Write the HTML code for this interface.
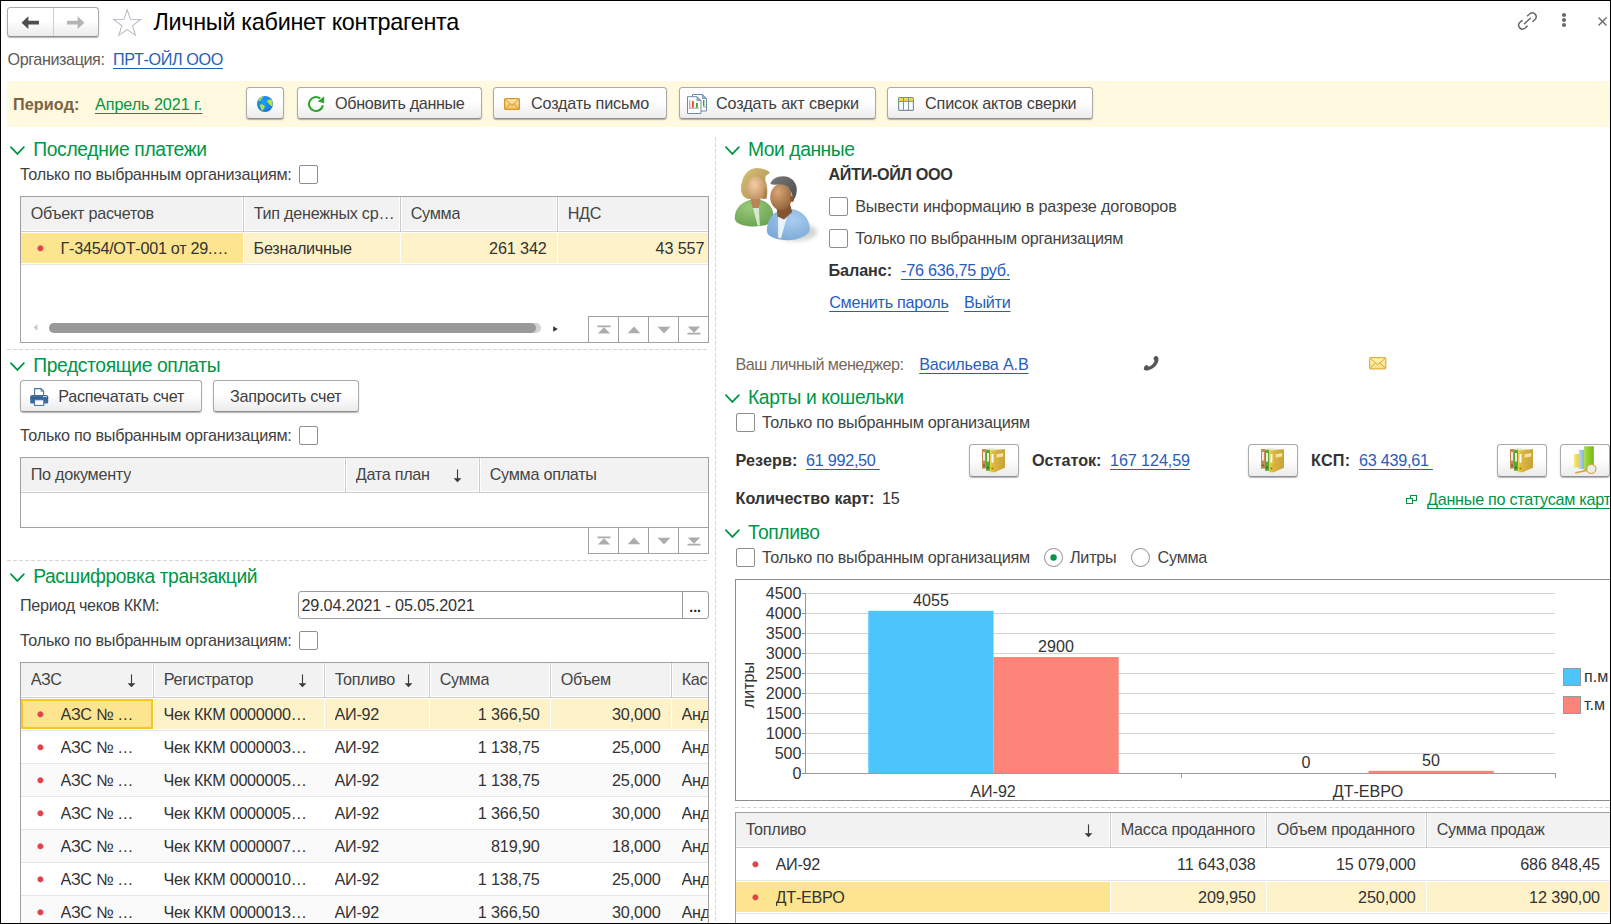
<!DOCTYPE html>
<html lang="ru"><head><meta charset="utf-8"><title>Личный кабинет контрагента</title>
<style>
html,body{margin:0;padding:0;background:#fff;}
body{width:1611px;height:924px;overflow:hidden;font-family:"Liberation Sans",sans-serif;}
#root{position:relative;width:1611px;height:924px;overflow:hidden;background:#fff;box-sizing:border-box;}
#frame{position:absolute;left:0;top:0;width:1611px;height:924px;box-sizing:border-box;border:1px solid #000;z-index:50;pointer-events:none;}
.t{position:absolute;white-space:nowrap;}
.btn{position:absolute;box-sizing:border-box;border:1px solid #ababab;border-bottom-color:#909090;border-radius:3.5px;background:linear-gradient(#ffffff 0%,#ffffff 45%,#ebebeb 100%);box-shadow:0 1px 0 rgba(0,0,0,.16),0 1px 2px rgba(0,0,0,.16);}
.cb{position:absolute;box-sizing:border-box;width:19px;height:19px;border:1px solid #8e8e8e;border-radius:2px;background:#fff;}
.rb{position:absolute;box-sizing:border-box;width:19px;height:19px;border:1px solid #8e8e8e;border-radius:50%;background:#fff;}
.tbl{position:absolute;box-sizing:border-box;border:1px solid #a0a0a0;background:#fff;overflow:hidden;}
.hd{position:absolute;background:#f2f2f2;box-sizing:border-box;}
.dash-h{position:absolute;height:1px !important;background:repeating-linear-gradient(90deg,#d6d6d6 0,#d6d6d6 4px,transparent 4px,transparent 6px);}
.dash-v{position:absolute;width:1px !important;background:repeating-linear-gradient(180deg,#d6d6d6 0,#d6d6d6 4px,transparent 4px,transparent 6px);}
.dot{position:absolute;width:9px;height:9px;background:radial-gradient(circle at 4.4px 4.3px,#df3f48 0,#e2464e 2.4px,rgba(226,70,78,0) 3.5px);}
svg{position:absolute;overflow:visible;}
</style></head><body><div id="root"><div id="frame"></div>
<div class="btn" style="position:absolute;left:7px;top:7px;width:92px;height:30px;"></div>
<div class="" style="position:absolute;left:53px;top:8px;width:1px;height:28px;background:#d0d0d0;"></div>
<svg style="left:21.4px;top:14.8px" width="19" height="15.4" viewBox="0 0 18 14" preserveAspectRatio="none"><path d="M0.5 7 L7 1.2 L7 5.3 L17 5.3 L17 8.7 L7 8.7 L7 12.8 Z" fill="#4d4d4d"/></svg>
<svg style="left:66.2px;top:14.8px" width="19" height="15.4" viewBox="0 0 18 14" preserveAspectRatio="none"><path d="M17.5 7 L11 1.2 L11 5.3 L1 5.3 L1 8.7 L11 8.7 L11 12.8 Z" fill="#b4b4b4"/></svg>
<svg style="left:112.2px;top:7.7px" width="30.3" height="29.3" viewBox="0 0 31 30"><path d="M15.5 1.8 L18.9 11.6 L29.3 11.8 L21 18.1 L24 28 L15.5 22.1 L7 28 L10 18.1 L1.7 11.8 L12.1 11.6 Z" fill="#fff" stroke="#b4bbc3" stroke-width="1.05" stroke-linejoin="miter"/></svg>
<div class="t " style="top:6.79px;font-size:23.4px;line-height:30px;color:#000;left:153.50px;letter-spacing:-0.290px;">Личный кабинет контрагента</div>
<svg style="left:1517.2px;top:11.2px" width="21" height="20.1" viewBox="0 0 23 22"><g fill="none" stroke="#666" stroke-width="1.6" stroke-linecap="round"><path d="M11.5 5.2 L14.2 3 A4.2 4.2 0 0 1 20 9 L17.4 11.4"/><path d="M11.2 16.6 L8.6 18.9 A4.2 4.2 0 0 1 2.8 12.9 L5.5 10.5"/><path d="M8.2 14 L14.6 8"/></g></svg>
<div class="" style="position:absolute;left:1561.8px;top:13.1px;width:4.4px;height:4.0px;border-radius:50%;background:#6a6a6a;"></div>
<div class="" style="position:absolute;left:1561.8px;top:18.1px;width:4.4px;height:4.0px;border-radius:50%;background:#6a6a6a;"></div>
<div class="" style="position:absolute;left:1561.8px;top:23.1px;width:4.4px;height:4.0px;border-radius:50%;background:#6a6a6a;"></div>
<svg style="left:1598px;top:17px" width="9" height="9" viewBox="0 0 9 9"><path d="M0.5 0.5 L8.5 8.5 M8.5 0.5 L0.5 8.5" stroke="#666" stroke-width="1.3" fill="none"/></svg>
<div class="t " style="top:48.59px;font-size:16.2px;line-height:21px;color:#5e5a54;left:7.50px;letter-spacing:-0.428px;">Организация:</div>
<div class="t " style="top:48.59px;font-size:16.2px;line-height:21px;color:#285dbb;left:113.00px;letter-spacing:-0.374px;text-decoration:underline;text-decoration-thickness:1px;text-underline-offset:2.5px;text-decoration-skip-ink:none;">ПРТ-ОЙЛ ООО</div>
<div class="" style="position:absolute;left:7px;top:81px;width:1603px;height:46px;background:#fff9df;"></div>
<div class="t " style="top:93.59px;font-size:16.2px;line-height:21px;color:#7a6243;left:13.00px;font-weight:bold;letter-spacing:0.096px;">Период:</div>
<div class="t " style="top:93.59px;font-size:16.2px;line-height:21px;color:#009646;left:95.00px;letter-spacing:-0.075px;text-decoration:underline;text-decoration-thickness:1px;text-underline-offset:2.5px;text-decoration-skip-ink:none;">Апрель 2021 г.</div>
<div class="btn" style="position:absolute;left:246px;top:87px;width:38px;height:32px;"></div>
<div class="btn" style="position:absolute;left:297px;top:87px;width:185px;height:32px;"></div>
<div class="btn" style="position:absolute;left:493px;top:87px;width:174px;height:32px;"></div>
<div class="btn" style="position:absolute;left:679px;top:87px;width:197px;height:32px;"></div>
<div class="btn" style="position:absolute;left:887px;top:87px;width:206px;height:32px;"></div>
<div class="t " style="top:93.09px;font-size:16.2px;line-height:21px;color:#3f3f3f;left:335.00px;letter-spacing:-0.351px;">Обновить данные</div>
<div class="t " style="top:93.09px;font-size:16.2px;line-height:21px;color:#3f3f3f;left:531.00px;letter-spacing:-0.177px;">Создать письмо</div>
<div class="t " style="top:93.09px;font-size:16.2px;line-height:21px;color:#3f3f3f;left:716.00px;letter-spacing:-0.102px;">Создать акт сверки</div>
<div class="t " style="top:93.09px;font-size:16.2px;line-height:21px;color:#3f3f3f;left:925.00px;letter-spacing:-0.164px;">Список актов сверки</div>
<div class="dash-v" style="position:absolute;left:715px;top:137px;width:0px;height:787px;"></div>
<svg style="left:10.1px;top:145.89999999999998px" width="15" height="10" viewBox="0 0 15 10"><path d="M0.9 1.1 L7.4 7.9 L13.9 1.1" fill="none" stroke="#009646" stroke-width="1.7" stroke-linecap="round" stroke-linejoin="miter"/></svg>
<div class="t " style="top:137.01px;font-size:19.3px;line-height:25px;color:#009646;left:33.20px;letter-spacing:-0.342px;">Последние платежи</div>
<div class="t " style="top:164.19px;font-size:16.2px;line-height:21px;color:#3f3f3f;left:20.00px;letter-spacing:-0.273px;">Только по выбранным организациям:</div>
<div class="cb" style="left:299px;top:165px"></div>
<div class="tbl" style="left:20px;top:196px;width:689px;height:147px;"></div>
<div class="" style="position:absolute;left:21px;top:197px;width:687px;height:33px;background:#f2f2f2;"></div>
<div class="" style="position:absolute;left:21px;top:231px;width:687px;height:1px;background:#cdcdcd;"></div>
<div class="" style="position:absolute;left:242px;top:197px;width:1px;height:34px;background:#fff;"></div>
<div class="" style="position:absolute;left:243px;top:197px;width:1px;height:35px;background:#cacaca;"></div>
<div class="" style="position:absolute;left:244px;top:197px;width:1px;height:34px;background:#fff;"></div>
<div class="" style="position:absolute;left:399px;top:197px;width:1px;height:34px;background:#fff;"></div>
<div class="" style="position:absolute;left:400px;top:197px;width:1px;height:35px;background:#cacaca;"></div>
<div class="" style="position:absolute;left:401px;top:197px;width:1px;height:34px;background:#fff;"></div>
<div class="" style="position:absolute;left:556px;top:197px;width:1px;height:34px;background:#fff;"></div>
<div class="" style="position:absolute;left:557px;top:197px;width:1px;height:35px;background:#cacaca;"></div>
<div class="" style="position:absolute;left:558px;top:197px;width:1px;height:34px;background:#fff;"></div>
<div class="t " style="top:202.89px;font-size:16.2px;line-height:21px;color:#444;left:30.70px;letter-spacing:-0.270px;max-width:215px;overflow:hidden;">Объект расчетов</div>
<div class="t " style="top:202.89px;font-size:16.2px;line-height:21px;color:#444;left:253.70px;letter-spacing:-0.270px;max-width:149px;overflow:hidden;">Тип денежных ср…</div>
<div class="t " style="top:202.89px;font-size:16.2px;line-height:21px;color:#444;left:410.70px;letter-spacing:-0.270px;max-width:149px;overflow:hidden;">Сумма</div>
<div class="t " style="top:202.89px;font-size:16.2px;line-height:21px;color:#444;left:567.70px;letter-spacing:-0.270px;max-width:140.3px;overflow:hidden;">НДС</div>
<div class="" style="position:absolute;left:21px;top:233px;width:222px;height:30px;background:#fde58f;"></div>
<div class="" style="position:absolute;left:244px;top:233px;width:156px;height:30px;background:#fef2c8;"></div>
<div class="" style="position:absolute;left:401px;top:233px;width:156px;height:30px;background:#fef2c8;"></div>
<div class="" style="position:absolute;left:558px;top:233px;width:150px;height:30px;background:#fef2c8;"></div>
<div class="" style="position:absolute;left:21px;top:264px;width:687px;height:1px;background:#e6e6e6;"></div>
<div class="dot" style="left:36px;top:244px"></div>
<div class="t " style="top:237.89px;font-size:16.2px;line-height:21px;color:#333;left:60.60px;letter-spacing:-0.270px;max-width:178.4px;overflow:hidden;">Г-3454/ОТ-001 от 29.…</div>
<div class="t " style="top:237.89px;font-size:16.2px;line-height:21px;color:#333;left:253.60px;letter-spacing:-0.270px;max-width:149px;overflow:hidden;">Безналичные</div>
<div class="t " style="top:237.89px;font-size:16.2px;line-height:21px;color:#333;right:1064.30px;letter-spacing:-0.120px;">261 342</div>
<div class="t " style="top:237.89px;font-size:16.2px;line-height:21px;color:#333;right:906.70px;letter-spacing:-0.120px;">43 557</div>
<svg style="left:33px;top:324px" width="5" height="7" viewBox="0 0 5 7"><path d="M4.5 0.3 L0.5 3.5 L4.5 6.7 Z" fill="#c8c8c8"/></svg>
<svg style="left:553px;top:325.5px" width="5" height="6" viewBox="0 0 5 6"><path d="M0.2 0.2 L4.8 3 L0.2 5.8 Z" fill="#333"/></svg>
<div class="" style="position:absolute;left:49px;top:323px;width:492px;height:9.5px;border-radius:5px;background:#d2d2d2;"></div>
<div class="" style="position:absolute;left:49px;top:323px;width:487px;height:9.5px;border-radius:5px;background:#999;"></div>
<div class="" style="position:absolute;left:588px;top:316px;width:121px;height:27px;box-sizing:border-box;border:1px solid #a0a0a0;background:#fff;"></div>
<div class="" style="position:absolute;left:618px;top:317px;width:1px;height:25px;background:#a0a0a0;"></div>
<div class="" style="position:absolute;left:648px;top:317px;width:1px;height:25px;background:#a0a0a0;"></div>
<div class="" style="position:absolute;left:678px;top:317px;width:1px;height:25px;background:#a0a0a0;"></div>
<svg style="left:596.5px;top:324.5px" width="14" height="10" viewBox="0 0 14 10"><path d="M0.5 0.6 H13.5 V2.2 H0.5 Z M7 2.2 L13.2 8.6 H0.8 Z" fill="#acacac"/></svg>
<svg style="left:626.5px;top:325.5px" width="14" height="8" viewBox="0 0 14 8"><path d="M7 0.6 L13.4 7.2 H0.6 Z" fill="#acacac"/></svg>
<svg style="left:656.5px;top:326.0px" width="14" height="8" viewBox="0 0 14 8"><path d="M7 7.4 L13.4 0.8 H0.6 Z" fill="#acacac"/></svg>
<svg style="left:686.5px;top:325.0px" width="14" height="10" viewBox="0 0 14 10"><path d="M0.5 9.4 H13.5 V7.8 H0.5 Z M7 7.8 L13.2 1.4 H0.8 Z" fill="#acacac"/></svg>
<div class="dash-h" style="position:absolute;left:7px;top:349px;width:700px;height:0px;"></div>
<svg style="left:10.1px;top:361.9px" width="15" height="10" viewBox="0 0 15 10"><path d="M0.9 1.1 L7.4 7.9 L13.9 1.1" fill="none" stroke="#009646" stroke-width="1.7" stroke-linecap="round" stroke-linejoin="miter"/></svg>
<div class="t " style="top:353.01px;font-size:19.3px;line-height:25px;color:#009646;left:33.20px;letter-spacing:-0.371px;">Предстоящие оплаты</div>
<div class="btn" style="position:absolute;left:20px;top:380px;width:182px;height:32px;"></div>
<div class="btn" style="position:absolute;left:213px;top:380px;width:146px;height:32px;"></div>
<div class="t " style="top:385.89px;font-size:16.2px;line-height:21px;color:#3f3f3f;left:58.30px;letter-spacing:-0.270px;">Распечатать счет</div>
<div class="t " style="top:385.89px;font-size:16.2px;line-height:21px;color:#3f3f3f;left:230.00px;letter-spacing:-0.270px;">Запросить счет</div>
<div class="t " style="top:425.19px;font-size:16.2px;line-height:21px;color:#3f3f3f;left:20.00px;letter-spacing:-0.273px;">Только по выбранным организациям:</div>
<div class="cb" style="left:299px;top:426px"></div>
<div class="tbl" style="left:20px;top:457px;width:689px;height:71px;"></div>
<div class="" style="position:absolute;left:21px;top:458px;width:687px;height:33px;background:#f2f2f2;"></div>
<div class="" style="position:absolute;left:21px;top:492px;width:687px;height:1px;background:#cdcdcd;"></div>
<div class="" style="position:absolute;left:344px;top:458px;width:1px;height:34px;background:#fff;"></div>
<div class="" style="position:absolute;left:345px;top:458px;width:1px;height:35px;background:#cacaca;"></div>
<div class="" style="position:absolute;left:346px;top:458px;width:1px;height:34px;background:#fff;"></div>
<div class="" style="position:absolute;left:478px;top:458px;width:1px;height:34px;background:#fff;"></div>
<div class="" style="position:absolute;left:479px;top:458px;width:1px;height:35px;background:#cacaca;"></div>
<div class="" style="position:absolute;left:480px;top:458px;width:1px;height:34px;background:#fff;"></div>
<div class="t " style="top:463.89px;font-size:16.2px;line-height:21px;color:#444;left:30.70px;letter-spacing:-0.270px;max-width:317px;overflow:hidden;">По документу</div>
<div class="t " style="top:463.89px;font-size:16.2px;line-height:21px;color:#444;left:355.70px;letter-spacing:-0.270px;max-width:126px;overflow:hidden;">Дата план</div>
<div class="t " style="top:463.89px;font-size:16.2px;line-height:21px;color:#444;left:489.70px;letter-spacing:-0.270px;max-width:218.3px;overflow:hidden;">Сумма оплаты</div>
<svg style="left:452.5px;top:469px" width="9" height="14" viewBox="0 0 9 14"><path d="M4.5 0.4 L4.5 10" fill="none" stroke="#3a3a3a" stroke-width="1.1"/><path d="M0.6 9.2 L8.4 9.2 L4.5 13.2 Z" fill="#3a3a3a"/></svg>
<div class="" style="position:absolute;left:588px;top:527px;width:121px;height:27px;box-sizing:border-box;border:1px solid #a0a0a0;background:#fff;"></div>
<div class="" style="position:absolute;left:618px;top:528px;width:1px;height:25px;background:#a0a0a0;"></div>
<div class="" style="position:absolute;left:648px;top:528px;width:1px;height:25px;background:#a0a0a0;"></div>
<div class="" style="position:absolute;left:678px;top:528px;width:1px;height:25px;background:#a0a0a0;"></div>
<svg style="left:596.5px;top:535.5px" width="14" height="10" viewBox="0 0 14 10"><path d="M0.5 0.6 H13.5 V2.2 H0.5 Z M7 2.2 L13.2 8.6 H0.8 Z" fill="#acacac"/></svg>
<svg style="left:626.5px;top:536.5px" width="14" height="8" viewBox="0 0 14 8"><path d="M7 0.6 L13.4 7.2 H0.6 Z" fill="#acacac"/></svg>
<svg style="left:656.5px;top:537.0px" width="14" height="8" viewBox="0 0 14 8"><path d="M7 7.4 L13.4 0.8 H0.6 Z" fill="#acacac"/></svg>
<svg style="left:686.5px;top:536.0px" width="14" height="10" viewBox="0 0 14 10"><path d="M0.5 9.4 H13.5 V7.8 H0.5 Z M7 7.8 L13.2 1.4 H0.8 Z" fill="#acacac"/></svg>
<div class="dash-h" style="position:absolute;left:7px;top:560px;width:700px;height:0px;"></div>
<svg style="left:10.1px;top:572.9000000000001px" width="15" height="10" viewBox="0 0 15 10"><path d="M0.9 1.1 L7.4 7.9 L13.9 1.1" fill="none" stroke="#009646" stroke-width="1.7" stroke-linecap="round" stroke-linejoin="miter"/></svg>
<div class="t " style="top:564.01px;font-size:19.3px;line-height:25px;color:#009646;left:33.20px;letter-spacing:-0.401px;">Расшифровка транзакций</div>
<div class="t " style="top:594.89px;font-size:16.2px;line-height:21px;color:#3f3f3f;left:20.00px;letter-spacing:-0.331px;">Период чеков ККМ:</div>
<div class="" style="position:absolute;left:298px;top:591px;width:411px;height:28px;box-sizing:border-box;border:1px solid #9c9c9c;border-radius:3px;background:#fff;"></div>
<div class="" style="position:absolute;left:682px;top:592px;width:1px;height:26px;background:#9c9c9c;"></div>
<div class="t " style="top:594.89px;font-size:16.2px;line-height:21px;color:#333;left:301.50px;letter-spacing:-0.140px;">29.04.2021 - 05.05.2021</div>
<div class="t " style="top:598.15px;font-size:14px;line-height:18px;color:#222;left:689.20px;font-weight:bold;letter-spacing:0.050px;">...</div>
<div class="t " style="top:629.89px;font-size:16.2px;line-height:21px;color:#3f3f3f;left:20.00px;letter-spacing:-0.273px;">Только по выбранным организациям:</div>
<div class="cb" style="left:299px;top:631px"></div>
<div class="tbl" style="left:20px;top:662px;width:689px;height:270px;border-bottom:none;"></div>
<div class="" style="position:absolute;left:21px;top:663px;width:687px;height:33px;background:#f2f2f2;"></div>
<div class="" style="position:absolute;left:21px;top:697px;width:687px;height:1px;background:#cdcdcd;"></div>
<div class="" style="position:absolute;left:152px;top:663px;width:1px;height:34px;background:#fff;"></div>
<div class="" style="position:absolute;left:153px;top:663px;width:1px;height:35px;background:#cacaca;"></div>
<div class="" style="position:absolute;left:154px;top:663px;width:1px;height:34px;background:#fff;"></div>
<div class="" style="position:absolute;left:323px;top:663px;width:1px;height:34px;background:#fff;"></div>
<div class="" style="position:absolute;left:324px;top:663px;width:1px;height:35px;background:#cacaca;"></div>
<div class="" style="position:absolute;left:325px;top:663px;width:1px;height:34px;background:#fff;"></div>
<div class="" style="position:absolute;left:428px;top:663px;width:1px;height:34px;background:#fff;"></div>
<div class="" style="position:absolute;left:429px;top:663px;width:1px;height:35px;background:#cacaca;"></div>
<div class="" style="position:absolute;left:430px;top:663px;width:1px;height:34px;background:#fff;"></div>
<div class="" style="position:absolute;left:549px;top:663px;width:1px;height:34px;background:#fff;"></div>
<div class="" style="position:absolute;left:550px;top:663px;width:1px;height:35px;background:#cacaca;"></div>
<div class="" style="position:absolute;left:551px;top:663px;width:1px;height:34px;background:#fff;"></div>
<div class="" style="position:absolute;left:670px;top:663px;width:1px;height:34px;background:#fff;"></div>
<div class="" style="position:absolute;left:671px;top:663px;width:1px;height:35px;background:#cacaca;"></div>
<div class="" style="position:absolute;left:672px;top:663px;width:1px;height:34px;background:#fff;"></div>
<div class="t " style="top:668.89px;font-size:16.2px;line-height:21px;color:#444;left:30.70px;letter-spacing:-0.270px;max-width:125px;overflow:hidden;">АЗС</div>
<div class="t " style="top:668.89px;font-size:16.2px;line-height:21px;color:#444;left:163.70px;letter-spacing:-0.270px;max-width:163px;overflow:hidden;">Регистратор</div>
<div class="t " style="top:668.89px;font-size:16.2px;line-height:21px;color:#444;left:334.70px;letter-spacing:-0.270px;max-width:97px;overflow:hidden;">Топливо</div>
<div class="t " style="top:668.89px;font-size:16.2px;line-height:21px;color:#444;left:439.70px;letter-spacing:-0.270px;max-width:113px;overflow:hidden;">Сумма</div>
<div class="t " style="top:668.89px;font-size:16.2px;line-height:21px;color:#444;left:560.70px;letter-spacing:-0.270px;max-width:113px;overflow:hidden;">Объем</div>
<div class="t " style="top:668.89px;font-size:16.2px;line-height:21px;color:#444;left:681.70px;letter-spacing:-0.270px;max-width:26.3px;overflow:hidden;">Касса</div>
<svg style="left:126.5px;top:674px" width="9" height="14" viewBox="0 0 9 14"><path d="M4.5 0.4 L4.5 10" fill="none" stroke="#3a3a3a" stroke-width="1.1"/><path d="M0.6 9.2 L8.4 9.2 L4.5 13.2 Z" fill="#3a3a3a"/></svg>
<svg style="left:297.5px;top:674px" width="9" height="14" viewBox="0 0 9 14"><path d="M4.5 0.4 L4.5 10" fill="none" stroke="#3a3a3a" stroke-width="1.1"/><path d="M0.6 9.2 L8.4 9.2 L4.5 13.2 Z" fill="#3a3a3a"/></svg>
<svg style="left:403.5px;top:674px" width="9" height="14" viewBox="0 0 9 14"><path d="M4.5 0.4 L4.5 10" fill="none" stroke="#3a3a3a" stroke-width="1.1"/><path d="M0.6 9.2 L8.4 9.2 L4.5 13.2 Z" fill="#3a3a3a"/></svg>
<div class="" style="position:absolute;left:21px;top:699px;width:132px;height:30px;background:#fde58f;"></div>
<div class="" style="position:absolute;left:154px;top:699px;width:170px;height:30px;background:#fef2c8;"></div>
<div class="" style="position:absolute;left:325px;top:699px;width:104px;height:30px;background:#fef2c8;"></div>
<div class="" style="position:absolute;left:430px;top:699px;width:120px;height:30px;background:#fef2c8;"></div>
<div class="" style="position:absolute;left:551px;top:699px;width:120px;height:30px;background:#fef2c8;"></div>
<div class="" style="position:absolute;left:672px;top:699px;width:36px;height:30px;background:#fef2c8;"></div>
<div class="" style="position:absolute;left:21px;top:730px;width:687px;height:1px;background:#e6e6e6;"></div>
<div class="dot" style="left:36px;top:710px"></div>
<div class="t " style="top:703.89px;font-size:16.2px;line-height:21px;color:#333;left:60.60px;letter-spacing:-0.270px;max-width:88.4px;overflow:hidden;">АЗС № …</div>
<div class="t " style="top:703.89px;font-size:16.2px;line-height:21px;color:#333;left:163.60px;letter-spacing:-0.270px;max-width:163px;overflow:hidden;">Чек ККМ 0000000…</div>
<div class="t " style="top:703.89px;font-size:16.2px;line-height:21px;color:#333;left:334.60px;letter-spacing:-0.270px;max-width:97px;overflow:hidden;">АИ-92</div>
<div class="t " style="top:703.89px;font-size:16.2px;line-height:21px;color:#333;right:1071.30px;letter-spacing:-0.120px;">1 366,50</div>
<div class="t " style="top:703.89px;font-size:16.2px;line-height:21px;color:#333;right:950.30px;letter-spacing:-0.120px;">30,000</div>
<div class="t " style="top:703.89px;font-size:16.2px;line-height:21px;color:#333;left:681.60px;letter-spacing:-0.270px;max-width:26.4px;overflow:hidden;">Андреев</div>
<div class="" style="position:absolute;left:21px;top:763px;width:687px;height:1px;background:#e6e6e6;"></div>
<div class="dot" style="left:36px;top:743px"></div>
<div class="t " style="top:736.89px;font-size:16.2px;line-height:21px;color:#333;left:60.60px;letter-spacing:-0.270px;max-width:88.4px;overflow:hidden;">АЗС № …</div>
<div class="t " style="top:736.89px;font-size:16.2px;line-height:21px;color:#333;left:163.60px;letter-spacing:-0.270px;max-width:163px;overflow:hidden;">Чек ККМ 0000003…</div>
<div class="t " style="top:736.89px;font-size:16.2px;line-height:21px;color:#333;left:334.60px;letter-spacing:-0.270px;max-width:97px;overflow:hidden;">АИ-92</div>
<div class="t " style="top:736.89px;font-size:16.2px;line-height:21px;color:#333;right:1071.30px;letter-spacing:-0.120px;">1 138,75</div>
<div class="t " style="top:736.89px;font-size:16.2px;line-height:21px;color:#333;right:950.30px;letter-spacing:-0.120px;">25,000</div>
<div class="t " style="top:736.89px;font-size:16.2px;line-height:21px;color:#333;left:681.60px;letter-spacing:-0.270px;max-width:26.4px;overflow:hidden;">Андреев</div>
<div class="" style="position:absolute;left:21px;top:764px;width:687px;height:32px;background:#fafafa;"></div>
<div class="" style="position:absolute;left:21px;top:796px;width:687px;height:1px;background:#e6e6e6;"></div>
<div class="dot" style="left:36px;top:776px"></div>
<div class="t " style="top:769.89px;font-size:16.2px;line-height:21px;color:#333;left:60.60px;letter-spacing:-0.270px;max-width:88.4px;overflow:hidden;">АЗС № …</div>
<div class="t " style="top:769.89px;font-size:16.2px;line-height:21px;color:#333;left:163.60px;letter-spacing:-0.270px;max-width:163px;overflow:hidden;">Чек ККМ 0000005…</div>
<div class="t " style="top:769.89px;font-size:16.2px;line-height:21px;color:#333;left:334.60px;letter-spacing:-0.270px;max-width:97px;overflow:hidden;">АИ-92</div>
<div class="t " style="top:769.89px;font-size:16.2px;line-height:21px;color:#333;right:1071.30px;letter-spacing:-0.120px;">1 138,75</div>
<div class="t " style="top:769.89px;font-size:16.2px;line-height:21px;color:#333;right:950.30px;letter-spacing:-0.120px;">25,000</div>
<div class="t " style="top:769.89px;font-size:16.2px;line-height:21px;color:#333;left:681.60px;letter-spacing:-0.270px;max-width:26.4px;overflow:hidden;">Андреев</div>
<div class="" style="position:absolute;left:21px;top:829px;width:687px;height:1px;background:#e6e6e6;"></div>
<div class="dot" style="left:36px;top:809px"></div>
<div class="t " style="top:802.89px;font-size:16.2px;line-height:21px;color:#333;left:60.60px;letter-spacing:-0.270px;max-width:88.4px;overflow:hidden;">АЗС № …</div>
<div class="t " style="top:802.89px;font-size:16.2px;line-height:21px;color:#333;left:163.60px;letter-spacing:-0.270px;max-width:163px;overflow:hidden;">Чек ККМ 0000005…</div>
<div class="t " style="top:802.89px;font-size:16.2px;line-height:21px;color:#333;left:334.60px;letter-spacing:-0.270px;max-width:97px;overflow:hidden;">АИ-92</div>
<div class="t " style="top:802.89px;font-size:16.2px;line-height:21px;color:#333;right:1071.30px;letter-spacing:-0.120px;">1 366,50</div>
<div class="t " style="top:802.89px;font-size:16.2px;line-height:21px;color:#333;right:950.30px;letter-spacing:-0.120px;">30,000</div>
<div class="t " style="top:802.89px;font-size:16.2px;line-height:21px;color:#333;left:681.60px;letter-spacing:-0.270px;max-width:26.4px;overflow:hidden;">Андреев</div>
<div class="" style="position:absolute;left:21px;top:830px;width:687px;height:32px;background:#fafafa;"></div>
<div class="" style="position:absolute;left:21px;top:862px;width:687px;height:1px;background:#e6e6e6;"></div>
<div class="dot" style="left:36px;top:842px"></div>
<div class="t " style="top:835.89px;font-size:16.2px;line-height:21px;color:#333;left:60.60px;letter-spacing:-0.270px;max-width:88.4px;overflow:hidden;">АЗС № …</div>
<div class="t " style="top:835.89px;font-size:16.2px;line-height:21px;color:#333;left:163.60px;letter-spacing:-0.270px;max-width:163px;overflow:hidden;">Чек ККМ 0000007…</div>
<div class="t " style="top:835.89px;font-size:16.2px;line-height:21px;color:#333;left:334.60px;letter-spacing:-0.270px;max-width:97px;overflow:hidden;">АИ-92</div>
<div class="t " style="top:835.89px;font-size:16.2px;line-height:21px;color:#333;right:1071.30px;letter-spacing:-0.120px;">819,90</div>
<div class="t " style="top:835.89px;font-size:16.2px;line-height:21px;color:#333;right:950.30px;letter-spacing:-0.120px;">18,000</div>
<div class="t " style="top:835.89px;font-size:16.2px;line-height:21px;color:#333;left:681.60px;letter-spacing:-0.270px;max-width:26.4px;overflow:hidden;">Андреев</div>
<div class="" style="position:absolute;left:21px;top:895px;width:687px;height:1px;background:#e6e6e6;"></div>
<div class="dot" style="left:36px;top:875px"></div>
<div class="t " style="top:868.89px;font-size:16.2px;line-height:21px;color:#333;left:60.60px;letter-spacing:-0.270px;max-width:88.4px;overflow:hidden;">АЗС № …</div>
<div class="t " style="top:868.89px;font-size:16.2px;line-height:21px;color:#333;left:163.60px;letter-spacing:-0.270px;max-width:163px;overflow:hidden;">Чек ККМ 0000010…</div>
<div class="t " style="top:868.89px;font-size:16.2px;line-height:21px;color:#333;left:334.60px;letter-spacing:-0.270px;max-width:97px;overflow:hidden;">АИ-92</div>
<div class="t " style="top:868.89px;font-size:16.2px;line-height:21px;color:#333;right:1071.30px;letter-spacing:-0.120px;">1 138,75</div>
<div class="t " style="top:868.89px;font-size:16.2px;line-height:21px;color:#333;right:950.30px;letter-spacing:-0.120px;">25,000</div>
<div class="t " style="top:868.89px;font-size:16.2px;line-height:21px;color:#333;left:681.60px;letter-spacing:-0.270px;max-width:26.4px;overflow:hidden;">Андреев</div>
<div class="" style="position:absolute;left:21px;top:896px;width:687px;height:32px;background:#fafafa;"></div>
<div class="" style="position:absolute;left:21px;top:928px;width:687px;height:1px;background:#e6e6e6;"></div>
<div class="dot" style="left:36px;top:908px"></div>
<div class="t " style="top:901.89px;font-size:16.2px;line-height:21px;color:#333;left:60.60px;letter-spacing:-0.270px;max-width:88.4px;overflow:hidden;">АЗС № …</div>
<div class="t " style="top:901.89px;font-size:16.2px;line-height:21px;color:#333;left:163.60px;letter-spacing:-0.270px;max-width:163px;overflow:hidden;">Чек ККМ 0000013…</div>
<div class="t " style="top:901.89px;font-size:16.2px;line-height:21px;color:#333;left:334.60px;letter-spacing:-0.270px;max-width:97px;overflow:hidden;">АИ-92</div>
<div class="t " style="top:901.89px;font-size:16.2px;line-height:21px;color:#333;right:1071.30px;letter-spacing:-0.120px;">1 366,50</div>
<div class="t " style="top:901.89px;font-size:16.2px;line-height:21px;color:#333;right:950.30px;letter-spacing:-0.120px;">30,000</div>
<div class="t " style="top:901.89px;font-size:16.2px;line-height:21px;color:#333;left:681.60px;letter-spacing:-0.270px;max-width:26.4px;overflow:hidden;">Андреев</div>
<div class="" style="position:absolute;left:21px;top:699px;width:132px;height:30px;box-sizing:border-box;border:2px solid #f7c52a;"></div>
<svg style="left:725.0px;top:145.89999999999998px" width="15" height="10" viewBox="0 0 15 10"><path d="M0.9 1.1 L7.4 7.9 L13.9 1.1" fill="none" stroke="#009646" stroke-width="1.7" stroke-linecap="round" stroke-linejoin="miter"/></svg>
<div class="t " style="top:137.01px;font-size:19.3px;line-height:25px;color:#009646;left:748.00px;letter-spacing:-0.448px;">Мои данные</div>
<svg style="left:730px;top:163px" width="90" height="85" viewBox="730 163 90 85"><ellipse cx="796" cy="232" rx="21" ry="9" fill="#000" opacity="0.17" filter="url(#fBlur2)"/><g filter="url(#fBlur)"><path d="M734.8 219 C734 207 745 199.6 755 199.3 C766 199.3 774 206 773.8 219 C773 224 762 226.6 754 226.6 C745 226.6 735.5 224 734.8 219 Z" fill="url(#gGreen)"/><path d="M752.5 206 L758.8 206 L759.8 225.6 L757.6 225.6 Z" fill="#d4ead0"/><path d="M750.5 199 L760.5 199 L758.8 208 L752.5 208 Z" fill="#b98457"/><path d="M741.3 190 C741 178 747 168.4 757 168.3 C763 168.3 768.5 170.5 769.8 173 C766 174.5 764.5 177 765.5 181 C767.5 186 768 193 766.5 198.5 L748 199 C743.5 197.5 741.5 194 741.3 190 Z" fill="url(#gHairW)"/><ellipse cx="756.2" cy="188" rx="9.3" ry="11.4" fill="url(#gSkinW)"/><path d="M744.5 188 C744 180 748 175.5 754 176.5 C760 177.5 766 175.5 769.8 173 C768.5 170.5 763 168.3 757 168.3 C748 168.3 741 176 741.3 190 C741.5 193 742.5 195 744 196.5 C744 193 744.3 190 744.5 188 Z" fill="url(#gHairW)"/><path d="M764.5 188 C766.5 190 767.8 194 766.5 198.5 L762.5 199 C764 196 764.8 192 764.5 188 Z" fill="#a8844e"/><path d="M767 232 C766 218 776 209.3 788 208.8 C800 208.8 810 217 809.8 230 C809 236 797 240.2 788 240.2 C778 240.2 767.6 237 767 232 Z" fill="url(#gBlue)"/><path d="M778 217 L787 217 L781 238.3 L778.2 237.8 Z" fill="#eaf2fa"/><path d="M776.5 206 L790 204 L792.2 212 L784 219.5 L777.5 216.5 Z" fill="#84552f"/><ellipse cx="781" cy="197" rx="10.8" ry="13.2" fill="url(#gSkinM)"/><path d="M770.3 184 C771.5 179.5 776.5 176.2 783 176.2 C791.5 176.2 797 182.5 796.8 190 C796.7 194.5 795 198.5 792.8 201 C793.2 197 792 192.5 789.8 190 C788.5 186.5 785 184.6 780.5 184.6 C776.5 184.6 773 185.2 770.3 184 Z" fill="url(#gHairM)"/><ellipse cx="792.2" cy="199" rx="1.7" ry="3" fill="#84552f"/></g></svg>
<div class="t " style="top:163.89px;font-size:16.2px;line-height:21px;color:#333;left:828.50px;font-weight:bold;letter-spacing:-0.341px;">АЙТИ-ОЙЛ ООО</div>
<div class="cb" style="left:829px;top:197px"></div>
<div class="t " style="top:195.99px;font-size:16.2px;line-height:21px;color:#434343;left:855.20px;letter-spacing:-0.146px;">Вывести информацию в разрезе договоров</div>
<div class="cb" style="left:829px;top:229px"></div>
<div class="t " style="top:227.89px;font-size:16.2px;line-height:21px;color:#434343;left:855.20px;letter-spacing:-0.250px;">Только по выбранным организациям</div>
<div class="t " style="top:259.89px;font-size:16.2px;line-height:21px;color:#333;left:828.50px;font-weight:bold;letter-spacing:-0.087px;">Баланс:</div>
<div class="t " style="top:259.89px;font-size:16.2px;line-height:21px;color:#285dbb;left:901.00px;letter-spacing:-0.252px;text-decoration:underline;text-decoration-thickness:1px;text-underline-offset:2.5px;text-decoration-skip-ink:none;">-76 636,75 руб.</div>
<div class="t " style="top:292.09px;font-size:16.2px;line-height:21px;color:#285dbb;left:829.20px;letter-spacing:-0.282px;text-decoration:underline;text-decoration-thickness:1px;text-underline-offset:2.5px;text-decoration-skip-ink:none;">Сменить пароль</div>
<div class="t " style="top:292.09px;font-size:16.2px;line-height:21px;color:#285dbb;left:964.00px;letter-spacing:-0.287px;text-decoration:underline;text-decoration-thickness:1px;text-underline-offset:2.5px;text-decoration-skip-ink:none;">Выйти</div>
<div class="t " style="top:353.89px;font-size:16.2px;line-height:21px;color:#77685a;left:735.50px;letter-spacing:-0.541px;">Ваш личный менеджер:</div>
<div class="t " style="top:353.89px;font-size:16.2px;line-height:21px;color:#285dbb;left:919.20px;letter-spacing:-0.194px;text-decoration:underline;text-decoration-thickness:1px;text-underline-offset:2.5px;text-decoration-skip-ink:none;">Васильева А.В</div>
<svg style="left:1142px;top:354px" width="18" height="18" viewBox="1142 354 18 18"><path fill="#555" d="M1153.6 358.2 C1154 356.4 1156 355.6 1157.4 356.4 C1158.8 357.6 1158.8 360.4 1157.8 362.4 C1156.6 365 1154.4 367.4 1151.6 369 C1149.4 370.2 1146.6 370.9 1145 370.3 C1143.6 369.6 1143.4 367.6 1144.6 366.4 C1145.4 365.4 1146.6 364.6 1147.4 365.4 C1147.9 366 1148.4 366.6 1149.2 366.4 C1151.4 365.6 1153.6 363.4 1154.4 361.4 C1154.7 360.6 1154.3 360 1153.8 359.4 C1153.5 359 1153.5 358.6 1153.6 358.2 Z"/></svg>

<svg style="left:725.0px;top:393.5px" width="15" height="10" viewBox="0 0 15 10"><path d="M0.9 1.1 L7.4 7.9 L13.9 1.1" fill="none" stroke="#009646" stroke-width="1.7" stroke-linecap="round" stroke-linejoin="miter"/></svg>
<div class="t " style="top:384.61px;font-size:19.3px;line-height:25px;color:#009646;left:748.00px;letter-spacing:-0.397px;">Карты и кошельки</div>
<div class="cb" style="left:736px;top:413px"></div>
<div class="t " style="top:411.89px;font-size:16.2px;line-height:21px;color:#434343;left:762.00px;letter-spacing:-0.250px;">Только по выбранным организациям</div>
<div class="t " style="top:450.19px;font-size:16.2px;line-height:21px;color:#333;left:735.50px;font-weight:bold;letter-spacing:0.076px;">Резерв:</div>
<div class="t " style="top:450.19px;font-size:16.2px;line-height:21px;color:#285dbb;left:806.00px;letter-spacing:-0.272px;text-decoration:underline;text-decoration-thickness:1px;text-underline-offset:2.5px;text-decoration-skip-ink:none;">61 992,50&nbsp;</div>
<div class="btn" style="position:absolute;left:969px;top:444px;width:50px;height:33px;"></div>
<div class="t " style="top:450.19px;font-size:16.2px;line-height:21px;color:#333;left:1032.00px;font-weight:bold;letter-spacing:-0.016px;">Остаток:</div>
<div class="t " style="top:450.19px;font-size:16.2px;line-height:21px;color:#285dbb;left:1110.00px;letter-spacing:-0.103px;text-decoration:underline;text-decoration-thickness:1px;text-underline-offset:2.5px;text-decoration-skip-ink:none;">167 124,59</div>
<div class="btn" style="position:absolute;left:1248px;top:444px;width:50px;height:33px;"></div>
<div class="t " style="top:450.19px;font-size:16.2px;line-height:21px;color:#333;left:1311.00px;font-weight:bold;letter-spacing:0.227px;">КСП:</div>
<div class="t " style="top:450.19px;font-size:16.2px;line-height:21px;color:#285dbb;left:1359.00px;letter-spacing:-0.262px;text-decoration:underline;text-decoration-thickness:1px;text-underline-offset:2.5px;text-decoration-skip-ink:none;">63 439,61&nbsp;</div>
<div class="btn" style="position:absolute;left:1497px;top:444px;width:50px;height:33px;"></div>
<div class="btn" style="position:absolute;left:1560px;top:444px;width:50px;height:33px;"></div>
<div class="t " style="top:487.89px;font-size:16.2px;line-height:21px;color:#333;left:735.50px;font-weight:bold;letter-spacing:0.004px;">Количество карт:</div>
<div class="t " style="top:487.89px;font-size:16.2px;line-height:21px;color:#333;left:882.00px;letter-spacing:-0.270px;">15</div>
<div class="t " style="top:489.29px;font-size:16.2px;line-height:21px;color:#009646;left:1427.00px;letter-spacing:-0.270px;text-decoration:underline;text-decoration-thickness:1px;text-underline-offset:2.5px;text-decoration-skip-ink:none;">Данные по статусам карт</div>
<svg style="left:1405px;top:494px" width="13" height="11" viewBox="1405 494 13 11"><rect x="1410.5" y="495.5" width="6" height="5" fill="#fff" stroke="#009646" stroke-width="1"/><rect x="1406.5" y="498.5" width="6" height="5" fill="#fff" stroke="#009646" stroke-width="1"/></svg>
<svg style="left:725.0px;top:528.7px" width="15" height="10" viewBox="0 0 15 10"><path d="M0.9 1.1 L7.4 7.9 L13.9 1.1" fill="none" stroke="#009646" stroke-width="1.7" stroke-linecap="round" stroke-linejoin="miter"/></svg>
<div class="t " style="top:519.81px;font-size:19.3px;line-height:25px;color:#009646;left:748.00px;letter-spacing:-0.388px;">Топливо</div>
<div class="cb" style="left:736px;top:548px"></div>
<div class="t " style="top:546.89px;font-size:16.2px;line-height:21px;color:#434343;left:762.00px;letter-spacing:-0.250px;">Только по выбранным организациям</div>
<div class="rb" style="left:1043.5px;top:548px"></div>
<svg style="left:1043px;top:548px" width="20" height="20" viewBox="0 0 20 20"><circle cx="10.55" cy="9.5" r="3.2" fill="#009646"/></svg>
<div class="t " style="top:546.89px;font-size:16.2px;line-height:21px;color:#434343;left:1070.00px;letter-spacing:-0.270px;">Литры</div>
<div class="rb" style="left:1130.7px;top:548px"></div>
<div class="t " style="top:546.89px;font-size:16.2px;line-height:21px;color:#434343;left:1157.60px;letter-spacing:-0.270px;">Сумма</div>
<div class="" style="position:absolute;left:735px;top:579px;width:880px;height:222px;box-sizing:border-box;border:1px solid #8c8c8c;background:#fff;"></div>
<svg style="left:735px;top:579px" width="875" height="222" viewBox="735 579 875 222" font-family="Liberation Sans, sans-serif"><rect x="802" y="773" width="4" height="1" fill="#8a8a8a"/><text x="801.5" y="779.00" font-size="16.1" fill="#333" text-anchor="end">0</text><rect x="806" y="753" width="749" height="1" fill="#d4d4d4"/><rect x="802" y="753" width="4" height="1" fill="#8a8a8a"/><text x="801.5" y="759.00" font-size="16.1" fill="#333" text-anchor="end">500</text><rect x="806" y="733" width="749" height="1" fill="#d4d4d4"/><rect x="802" y="733" width="4" height="1" fill="#8a8a8a"/><text x="801.5" y="739.00" font-size="16.1" fill="#333" text-anchor="end">1000</text><rect x="806" y="713" width="749" height="1" fill="#d4d4d4"/><rect x="802" y="713" width="4" height="1" fill="#8a8a8a"/><text x="801.5" y="719.00" font-size="16.1" fill="#333" text-anchor="end">1500</text><rect x="806" y="693" width="749" height="1" fill="#d4d4d4"/><rect x="802" y="693" width="4" height="1" fill="#8a8a8a"/><text x="801.5" y="699.00" font-size="16.1" fill="#333" text-anchor="end">2000</text><rect x="806" y="673" width="749" height="1" fill="#d4d4d4"/><rect x="802" y="673" width="4" height="1" fill="#8a8a8a"/><text x="801.5" y="679.00" font-size="16.1" fill="#333" text-anchor="end">2500</text><rect x="806" y="653" width="749" height="1" fill="#d4d4d4"/><rect x="802" y="653" width="4" height="1" fill="#8a8a8a"/><text x="801.5" y="659.00" font-size="16.1" fill="#333" text-anchor="end">3000</text><rect x="806" y="633" width="749" height="1" fill="#d4d4d4"/><rect x="802" y="633" width="4" height="1" fill="#8a8a8a"/><text x="801.5" y="639.00" font-size="16.1" fill="#333" text-anchor="end">3500</text><rect x="806" y="613" width="749" height="1" fill="#d4d4d4"/><rect x="802" y="613" width="4" height="1" fill="#8a8a8a"/><text x="801.5" y="619.00" font-size="16.1" fill="#333" text-anchor="end">4000</text><rect x="806" y="593" width="749" height="1" fill="#d4d4d4"/><rect x="802" y="593" width="4" height="1" fill="#8a8a8a"/><text x="801.5" y="599.00" font-size="16.1" fill="#333" text-anchor="end">4500</text><rect x="868.3" y="610.80" width="125.2" height="162.20" fill="#4cc4fc"/><rect x="993.5" y="657.00" width="125.2" height="116.00" fill="#fc8478"/><rect x="1368.5" y="770.80" width="125.2" height="2.2" fill="#fc8478"/><rect x="805" y="593" width="1" height="181" fill="#9a9a9a"/><rect x="805" y="773.0" width="751" height="1" fill="#9a9a9a"/><rect x="1181" y="773.0" width="1" height="5" fill="#9a9a9a"/><rect x="1555" y="773.0" width="1" height="5" fill="#9a9a9a"/><text x="931" y="606" font-size="16.1" fill="#333" text-anchor="middle">4055</text><text x="1056" y="652" font-size="16.1" fill="#333" text-anchor="middle">2900</text><text x="1306" y="768" font-size="16.1" fill="#333" text-anchor="middle">0</text><text x="1431" y="766" font-size="16.1" fill="#333" text-anchor="middle">50</text><text x="993" y="797" font-size="16.1" fill="#333" text-anchor="middle">АИ-92</text><text x="1368" y="797" font-size="16.1" fill="#333" text-anchor="middle">ДТ-ЕВРО</text><text transform="translate(754,685) rotate(-90)" font-size="16.1" fill="#333" text-anchor="middle">литры</text><rect x="1563.5" y="668.5" width="17" height="17" fill="#4cc4fc" stroke="#9a9a9a" stroke-width="1"/><rect x="1563.5" y="696.5" width="17" height="17" fill="#fc8478" stroke="#9a9a9a" stroke-width="1"/><text x="1584" y="682" font-size="16.1" fill="#333">п.м</text><text x="1584" y="710" font-size="16.1" fill="#333">т.м</text></svg>
<div class="dash-h" style="position:absolute;left:735px;top:807px;width:876px;height:0px;"></div>
<div class="tbl" style="left:735px;top:812px;width:880px;height:120px;border-right:none;border-bottom:none;"></div>
<div class="" style="position:absolute;left:736px;top:813px;width:879px;height:33px;background:#f2f2f2;"></div>
<div class="" style="position:absolute;left:736px;top:847px;width:879px;height:1px;background:#cdcdcd;"></div>
<div class="" style="position:absolute;left:1109px;top:813px;width:1px;height:34px;background:#fff;"></div>
<div class="" style="position:absolute;left:1110px;top:813px;width:1px;height:35px;background:#cacaca;"></div>
<div class="" style="position:absolute;left:1111px;top:813px;width:1px;height:34px;background:#fff;"></div>
<div class="" style="position:absolute;left:1265px;top:813px;width:1px;height:34px;background:#fff;"></div>
<div class="" style="position:absolute;left:1266px;top:813px;width:1px;height:35px;background:#cacaca;"></div>
<div class="" style="position:absolute;left:1267px;top:813px;width:1px;height:34px;background:#fff;"></div>
<div class="" style="position:absolute;left:1425px;top:813px;width:1px;height:34px;background:#fff;"></div>
<div class="" style="position:absolute;left:1426px;top:813px;width:1px;height:35px;background:#cacaca;"></div>
<div class="" style="position:absolute;left:1427px;top:813px;width:1px;height:34px;background:#fff;"></div>
<div class="t " style="top:818.89px;font-size:16.2px;line-height:21px;color:#444;left:745.70px;letter-spacing:-0.270px;max-width:367px;overflow:hidden;">Топливо</div>
<div class="t " style="top:818.89px;font-size:16.2px;line-height:21px;color:#444;left:1120.70px;letter-spacing:-0.270px;max-width:148px;overflow:hidden;">Масса проданного</div>
<div class="t " style="top:818.89px;font-size:16.2px;line-height:21px;color:#444;left:1276.70px;letter-spacing:-0.270px;max-width:152px;overflow:hidden;">Объем проданного</div>
<div class="t " style="top:818.89px;font-size:16.2px;line-height:21px;color:#444;left:1436.70px;letter-spacing:-0.270px;max-width:178.3px;overflow:hidden;">Сумма продаж</div>
<svg style="left:1083.5px;top:824px" width="9" height="14" viewBox="0 0 9 14"><path d="M4.5 0.4 L4.5 10" fill="none" stroke="#3a3a3a" stroke-width="1.1"/><path d="M0.6 9.2 L8.4 9.2 L4.5 13.2 Z" fill="#3a3a3a"/></svg>
<div class="" style="position:absolute;left:736px;top:880px;width:879px;height:1px;background:#e6e6e6;"></div>
<div class="dot" style="left:751px;top:860px"></div>
<div class="t " style="top:853.89px;font-size:16.2px;line-height:21px;color:#333;left:775.60px;letter-spacing:-0.270px;max-width:330.4px;overflow:hidden;">АИ-92</div>
<div class="t " style="top:853.89px;font-size:16.2px;line-height:21px;color:#333;right:355.30px;letter-spacing:-0.120px;">11 643,038</div>
<div class="t " style="top:853.89px;font-size:16.2px;line-height:21px;color:#333;right:195.30px;letter-spacing:-0.120px;">15 079,000</div>
<div class="t " style="top:853.89px;font-size:16.2px;line-height:21px;color:#333;right:11.00px;letter-spacing:-0.120px;">686 848,45</div>
<div class="" style="position:absolute;left:736px;top:882px;width:374px;height:30px;background:#fde58f;"></div>
<div class="" style="position:absolute;left:1111px;top:882px;width:155px;height:30px;background:#fef2c8;"></div>
<div class="" style="position:absolute;left:1267px;top:882px;width:159px;height:30px;background:#fef2c8;"></div>
<div class="" style="position:absolute;left:1427px;top:882px;width:188px;height:30px;background:#fef2c8;"></div>
<div class="" style="position:absolute;left:736px;top:913px;width:879px;height:1px;background:#e6e6e6;"></div>
<div class="dot" style="left:751px;top:893px"></div>
<div class="t " style="top:886.89px;font-size:16.2px;line-height:21px;color:#333;left:775.60px;letter-spacing:-0.270px;max-width:330.4px;overflow:hidden;">ДТ-ЕВРО</div>
<div class="t " style="top:886.89px;font-size:16.2px;line-height:21px;color:#333;right:355.30px;letter-spacing:-0.120px;">209,950</div>
<div class="t " style="top:886.89px;font-size:16.2px;line-height:21px;color:#333;right:195.30px;letter-spacing:-0.120px;">250,000</div>
<div class="t " style="top:886.89px;font-size:16.2px;line-height:21px;color:#333;right:11.00px;letter-spacing:-0.120px;">12 390,00</div>
<svg width="0" height="0" style="left:0;top:0"><defs>
<radialGradient id="gGlobe" cx="0.4" cy="0.35" r="0.75"><stop offset="0" stop-color="#1aa0ff"/><stop offset="1" stop-color="#1a6fe0"/></radialGradient>
<linearGradient id="gMail" x1="0" y1="0" x2="0" y2="1"><stop offset="0" stop-color="#feecb4"/><stop offset="1" stop-color="#f5bf5c"/></linearGradient>
<linearGradient id="gMail2" x1="0" y1="0" x2="0" y2="1"><stop offset="0" stop-color="#fdf5b8"/><stop offset="1" stop-color="#f7dc84"/></linearGradient>
<radialGradient id="gSkinW" cx="0.4" cy="0.35" r="0.8"><stop offset="0" stop-color="#f3cfa5"/><stop offset="1" stop-color="#b98457"/></radialGradient>
<radialGradient id="gSkinM" cx="0.35" cy="0.3" r="0.85"><stop offset="0" stop-color="#d9a675"/><stop offset="1" stop-color="#8a5a35"/></radialGradient>
<radialGradient id="gGreen" cx="0.4" cy="0.3" r="0.9"><stop offset="0" stop-color="#9cc97c"/><stop offset="1" stop-color="#5f9a48"/></radialGradient>
<radialGradient id="gBlue" cx="0.6" cy="0.35" r="0.9"><stop offset="0" stop-color="#a9cdf0"/><stop offset="1" stop-color="#6f9fd0"/></radialGradient>
<linearGradient id="gHairW" x1="0" y1="0" x2="1" y2="1"><stop offset="0" stop-color="#d9c27a"/><stop offset="1" stop-color="#a98d4c"/></linearGradient>
<linearGradient id="gHairM" x1="0" y1="0" x2="1" y2="1"><stop offset="0" stop-color="#7a7a7a"/><stop offset="1" stop-color="#4a4a4a"/></linearGradient>
<filter id="fBlur" x="-20%" y="-20%" width="140%" height="140%"><feGaussianBlur stdDeviation="0.55"/></filter>
<filter id="fBlur2" x="-50%" y="-50%" width="200%" height="200%"><feGaussianBlur stdDeviation="2.2"/></filter>
<linearGradient id="gFy" x1="0" y1="0" x2="1" y2="0"><stop offset="0" stop-color="#f0d040"/><stop offset="1" stop-color="#d8b030"/></linearGradient>
<linearGradient id="gFs" x1="0" y1="0" x2="1" y2="0"><stop offset="0" stop-color="#d9b440"/><stop offset="1" stop-color="#c9a238"/></linearGradient>
<linearGradient id="gBarG" x1="0" y1="0" x2="1" y2="0"><stop offset="0" stop-color="#a8dc48"/><stop offset="0.45" stop-color="#8fcc2c"/><stop offset="1" stop-color="#76b41c"/></linearGradient>
<linearGradient id="gBarB" x1="0" y1="0" x2="1" y2="0"><stop offset="0" stop-color="#b8d8ec"/><stop offset="1" stop-color="#8ab4d0"/></linearGradient>
<linearGradient id="gBarY" x1="0" y1="0" x2="1" y2="0"><stop offset="0" stop-color="#f6ec88"/><stop offset="1" stop-color="#e6cc40"/></linearGradient>
</defs></svg>
<svg style="left:256px;top:95px" width="18" height="18" viewBox="-9 -9 18 18"><circle r="8" fill="url(#gGlobe)"/><path d="M-6.6 -3.6 C-5.5 -5.8 -3.2 -7.2 -1.6 -7.4 C-2.2 -6 -3.6 -5.2 -4.2 -3.8 C-4.8 -2.8 -6 -2.6 -6.6 -3.6 Z" fill="#a6e03a"/><path d="M-4.6 0.4 C-3 -0.2 -1.4 0.8 -0.4 2 C0.4 3 -0.6 4.2 -1.6 5.2 C-2.2 6 -2.6 7 -3.4 6.6 C-3.8 5 -4.2 3.6 -4.8 2.4 C-5.2 1.6 -5.2 0.8 -4.6 0.4 Z" fill="#b4e43c"/><path d="M2.2 -3.4 C3.4 -4.6 5.2 -4.8 6.4 -4 C7.4 -2.4 7.8 -0.6 7.6 1.6 C6.6 2.8 5.6 1.6 4.6 0.4 C3.6 -0.4 1.8 -1.8 2.2 -3.4 Z" fill="#b4e43c"/></svg>
<svg style="left:306px;top:94px" width="20" height="20" viewBox="-10 -10 20 20"><path d="M4.2 -5.6 A7 7 0 1 0 6.9 1.2" fill="none" stroke="#2fa42c" stroke-width="2.1"/><path d="M1.6 -2.4 L8.2 -7.8 L8.2 -0.8 Z" fill="#2fa42c"/></svg>
<svg style="left:504px;top:98px" width="16" height="12" viewBox="0 0 16 12"><rect x="0.6" y="0.6" width="14.8" height="10.8" rx="1" fill="url(#gMail)" stroke="#d8922a" stroke-width="1.2"/><path d="M1.4 1.6 L8.0 7.4399999999999995 L14.6 1.6 M1.6 10.4 L5.76 6.0 M14.4 10.4 L10.24 6.0" fill="none" stroke="#d8922a" stroke-width="1"/></svg>
<svg style="left:686px;top:93px" width="22" height="22" viewBox="686 93 22 22"><path d="M692.5 94.5 H702.5 L706.5 98.5 V111 H692.5 Z" fill="#fff" stroke="#6d8ba8" stroke-width="1"/><path d="M702.5 94.5 V98.5 H706.5 Z" fill="#9fb4c8" stroke="#6d8ba8" stroke-width="0.8"/><rect x="703" y="100" width="1.4" height="6" fill="#3aa52a"/><rect x="703" y="106.4" width="3" height="1" fill="#999"/><path d="M687.5 96.7 H697 L701 100.7 V113.5 H687.5 Z" fill="#fff" stroke="#6d8ba8" stroke-width="1"/><path d="M697 96.7 V100.7 H701 Z" fill="#9fb4c8" stroke="#6d8ba8" stroke-width="0.8"/><rect x="689.3" y="100" width="1.1" height="8.3" fill="#a0a0a0"/><rect x="689.3" y="107.6" width="9.6" height="1.1" fill="#a0a0a0"/><rect x="692" y="101" width="1.8" height="6.6" fill="#f0442c"/><rect x="696" y="103" width="1.8" height="4.6" fill="#3aa52a"/></svg>
<svg style="left:898px;top:97px" width="16" height="14" viewBox="0 0 16 14"><rect x="0.6" y="0.6" width="14.8" height="12.8" rx="1" fill="#fff" stroke="#788ea6" stroke-width="1.2"/><rect x="1.2" y="1.2" width="13.6" height="2.9" fill="#ffd92a"/><path d="M5.45 0.6 V13.4 M10.55 0.6 V13.4 M0.6 4.4 H15.4" stroke="#788ea6" stroke-width="1" fill="none"/></svg>
<svg style="left:30px;top:388px" width="19" height="18" viewBox="0 0 19 18"><path d="M4.6 0.6 H11 L13.6 3.2 V8 H4.6 Z" fill="#fff" stroke="#4a74a6" stroke-width="1.1"/><path d="M11 0.6 V3.2 H13.6" fill="none" stroke="#4a74a6" stroke-width="0.9"/><path d="M2 7 H16.4 Q18.2 7 18.2 8.8 V14.2 Q18.2 15.4 17 15.4 H1.4 Q0.2 15.4 0.2 14.2 V8.8 Q0.2 7 2 7 Z" fill="#3f6c9f"/><rect x="0.2" y="9.6" width="18" height="1" fill="#2f5888"/><rect x="13.2" y="8" width="1.3" height="1.2" fill="#fff"/><rect x="15.4" y="8" width="1.3" height="1.2" fill="#fff"/><rect x="4.6" y="11.8" width="9.2" height="5.6" fill="#fff" stroke="#3f6c9f" stroke-width="1"/></svg>
<svg style="left:1369.3px;top:356.7px" width="17.4" height="12.4" viewBox="0 0 17.4 12.4"><rect x="0.6" y="0.6" width="16.2" height="11.200000000000001" rx="1" fill="url(#gMail2)" stroke="#dcb040" stroke-width="1.2"/><path d="M1.4 1.6 L8.7 7.688 L15.999999999999998 1.6 M1.6 10.8 L6.263999999999999 6.2 M15.799999999999999 10.8 L11.136 6.2" fill="none" stroke="#d4a838" stroke-width="1"/></svg>
<svg style="left:980px;top:447px" width="28" height="28" viewBox="980 447 28 28"><g filter="url(#fBlur)"><path d="M982 449.4 L990 448.2 L1004.8 449.2 L1004.8 450.5 L982 451 Z" fill="#e8e4c0"/><rect x="982" y="449" width="4" height="19.6" fill="#c48a50"/><rect x="986" y="449.8" width="4" height="21" fill="#58a838"/><rect x="990" y="450.3" width="4.9" height="22" fill="url(#gFy)"/><path d="M994.9 450.3 L1005 449.3 L1005 467.8 L994.9 472.3 Z" fill="url(#gFs)"/><rect x="983.2" y="452" width="1.6" height="8.6" fill="#fff"/><rect x="987.2" y="453" width="1.7" height="8.6" fill="#fff"/><rect x="991.5" y="454" width="1.9" height="8.6" fill="#fff"/><path d="M996.6 454.2 L1003.2 453 L1003.2 456.4 L996.6 457.8 Z" fill="#efe2a4"/><circle cx="984" cy="465.5" r="1" fill="#7a5a30"/><circle cx="988" cy="467.5" r="1" fill="#2f6a20"/><circle cx="992.4" cy="468.5" r="1.1" fill="#9a7a10"/></g></svg>
<svg style="left:1259px;top:447px" width="28" height="28" viewBox="980 447 28 28"><g filter="url(#fBlur)"><path d="M982 449.4 L990 448.2 L1004.8 449.2 L1004.8 450.5 L982 451 Z" fill="#e8e4c0"/><rect x="982" y="449" width="4" height="19.6" fill="#c48a50"/><rect x="986" y="449.8" width="4" height="21" fill="#58a838"/><rect x="990" y="450.3" width="4.9" height="22" fill="url(#gFy)"/><path d="M994.9 450.3 L1005 449.3 L1005 467.8 L994.9 472.3 Z" fill="url(#gFs)"/><rect x="983.2" y="452" width="1.6" height="8.6" fill="#fff"/><rect x="987.2" y="453" width="1.7" height="8.6" fill="#fff"/><rect x="991.5" y="454" width="1.9" height="8.6" fill="#fff"/><path d="M996.6 454.2 L1003.2 453 L1003.2 456.4 L996.6 457.8 Z" fill="#efe2a4"/><circle cx="984" cy="465.5" r="1" fill="#7a5a30"/><circle cx="988" cy="467.5" r="1" fill="#2f6a20"/><circle cx="992.4" cy="468.5" r="1.1" fill="#9a7a10"/></g></svg>
<svg style="left:1508px;top:447px" width="28" height="28" viewBox="980 447 28 28"><g filter="url(#fBlur)"><path d="M982 449.4 L990 448.2 L1004.8 449.2 L1004.8 450.5 L982 451 Z" fill="#e8e4c0"/><rect x="982" y="449" width="4" height="19.6" fill="#c48a50"/><rect x="986" y="449.8" width="4" height="21" fill="#58a838"/><rect x="990" y="450.3" width="4.9" height="22" fill="url(#gFy)"/><path d="M994.9 450.3 L1005 449.3 L1005 467.8 L994.9 472.3 Z" fill="url(#gFs)"/><rect x="983.2" y="452" width="1.6" height="8.6" fill="#fff"/><rect x="987.2" y="453" width="1.7" height="8.6" fill="#fff"/><rect x="991.5" y="454" width="1.9" height="8.6" fill="#fff"/><path d="M996.6 454.2 L1003.2 453 L1003.2 456.4 L996.6 457.8 Z" fill="#efe2a4"/><circle cx="984" cy="465.5" r="1" fill="#7a5a30"/><circle cx="988" cy="467.5" r="1" fill="#2f6a20"/><circle cx="992.4" cy="468.5" r="1.1" fill="#9a7a10"/></g></svg>
<svg style="left:1570px;top:444px" width="30" height="32" viewBox="1570 444 30 32"><g filter="url(#fBlur)"><rect x="1574" y="454" width="4.9" height="13.6" fill="url(#gBarY)"/><rect x="1578.9" y="449.8" width="5.2" height="19.2" fill="url(#gBarB)"/><rect x="1584.1" y="446.3" width="9.7" height="23.8" fill="url(#gBarG)"/><path d="M1576 472.8 L1586.5 470.4" stroke="#e0a030" stroke-width="1.6" stroke-linecap="round"/><circle cx="1591.3" cy="468.9" r="4.6" fill="#e2f0e6" stroke="#e0a040" stroke-width="1.2"/></g></svg>
</div></body></html>
